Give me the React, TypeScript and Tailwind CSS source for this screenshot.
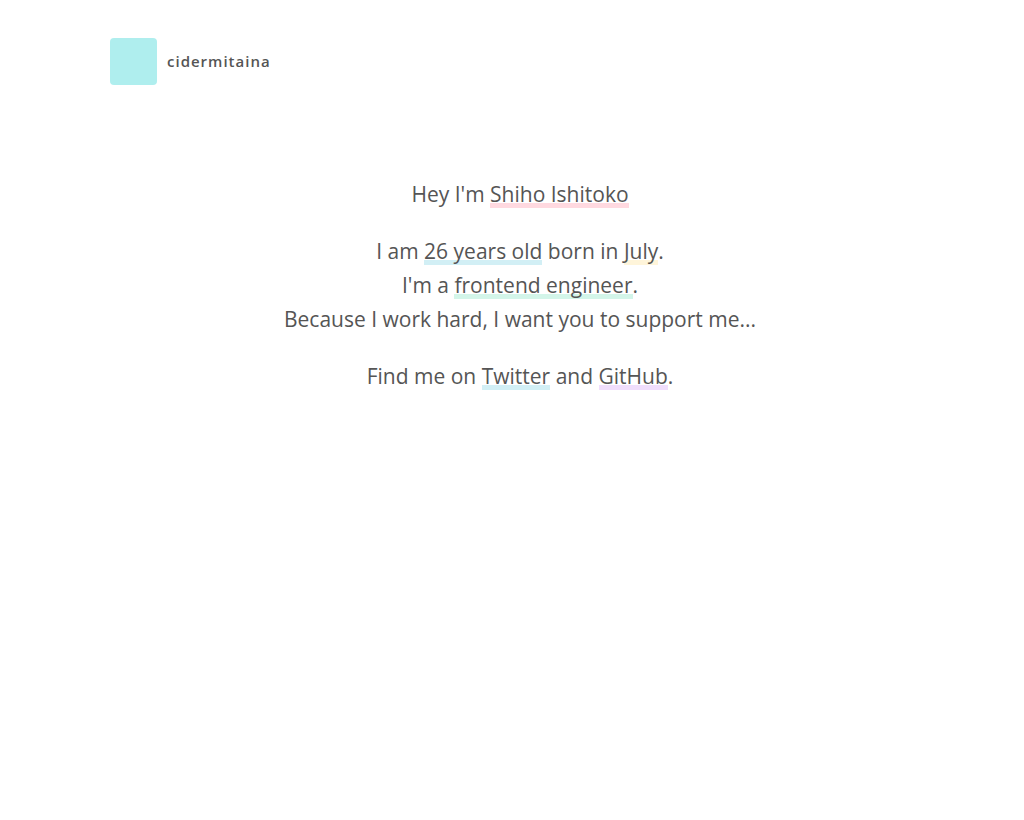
import type { ReactNode } from 'react'

const marks = {
  pink: 'bg-[linear-gradient(transparent_23px,#ffd9e0_23px,#ffd9e0_28px,transparent_28px)]',
  blue: 'bg-[linear-gradient(transparent_23px,#d2eff5_23px,#d2eff5_28px,transparent_28px)]',
  yellow: 'bg-[linear-gradient(transparent_23px,#fff5da_23px,#fff5da_28px,transparent_28px)]',
  green: 'bg-[linear-gradient(transparent_23px,#d3f5e9_23px,#d3f5e9_28px,transparent_28px)]',
  purple: 'bg-[linear-gradient(transparent_23px,#f0defc_23px,#f0defc_28px,transparent_28px)]',
}

export default function App() {
  return (
    <div className="min-h-screen bg-white pt-[38px] pr-[94px] pl-[110px] font-['Open_Sans','Noto_Sans',sans-serif] text-[#555]">
      <header className="flex">
        <a href="/" className="flex items-center gap-[10px]">
          <span className="size-[47px] rounded bg-[#afeeee]" />
          <span className="text-[15px] font-semibold tracking-[1px]">cidermitaina</span>
        </a>
      </header>

      <main className="mt-[92px] space-y-[23px] text-center text-[21px] leading-[34px]">
        <p>
          Hey I'm <Mark color="pink">Shiho Ishitoko</Mark>
        </p>
        <p>
          I am <Mark color="blue">26 years old</Mark> born in <Mark color="yellow">July</Mark>.
          <br />
          I'm a <Mark color="green">frontend engineer</Mark>.
          <br />
          Because I work hard, I want you to support me...
        </p>
        <p>
          Find me on <a href="https://twitter.com/cidermitaina" className={marks.blue}>Twitter</a> and{' '}
          <a href="https://github.com/cidermitaina" className={marks.purple}>GitHub</a>.
        </p>
      </main>
    </div>
  )
}

function Mark({ color, children }: { color: keyof typeof marks; children: ReactNode }) {
  return <span className={marks[color]}>{children}</span>
}
